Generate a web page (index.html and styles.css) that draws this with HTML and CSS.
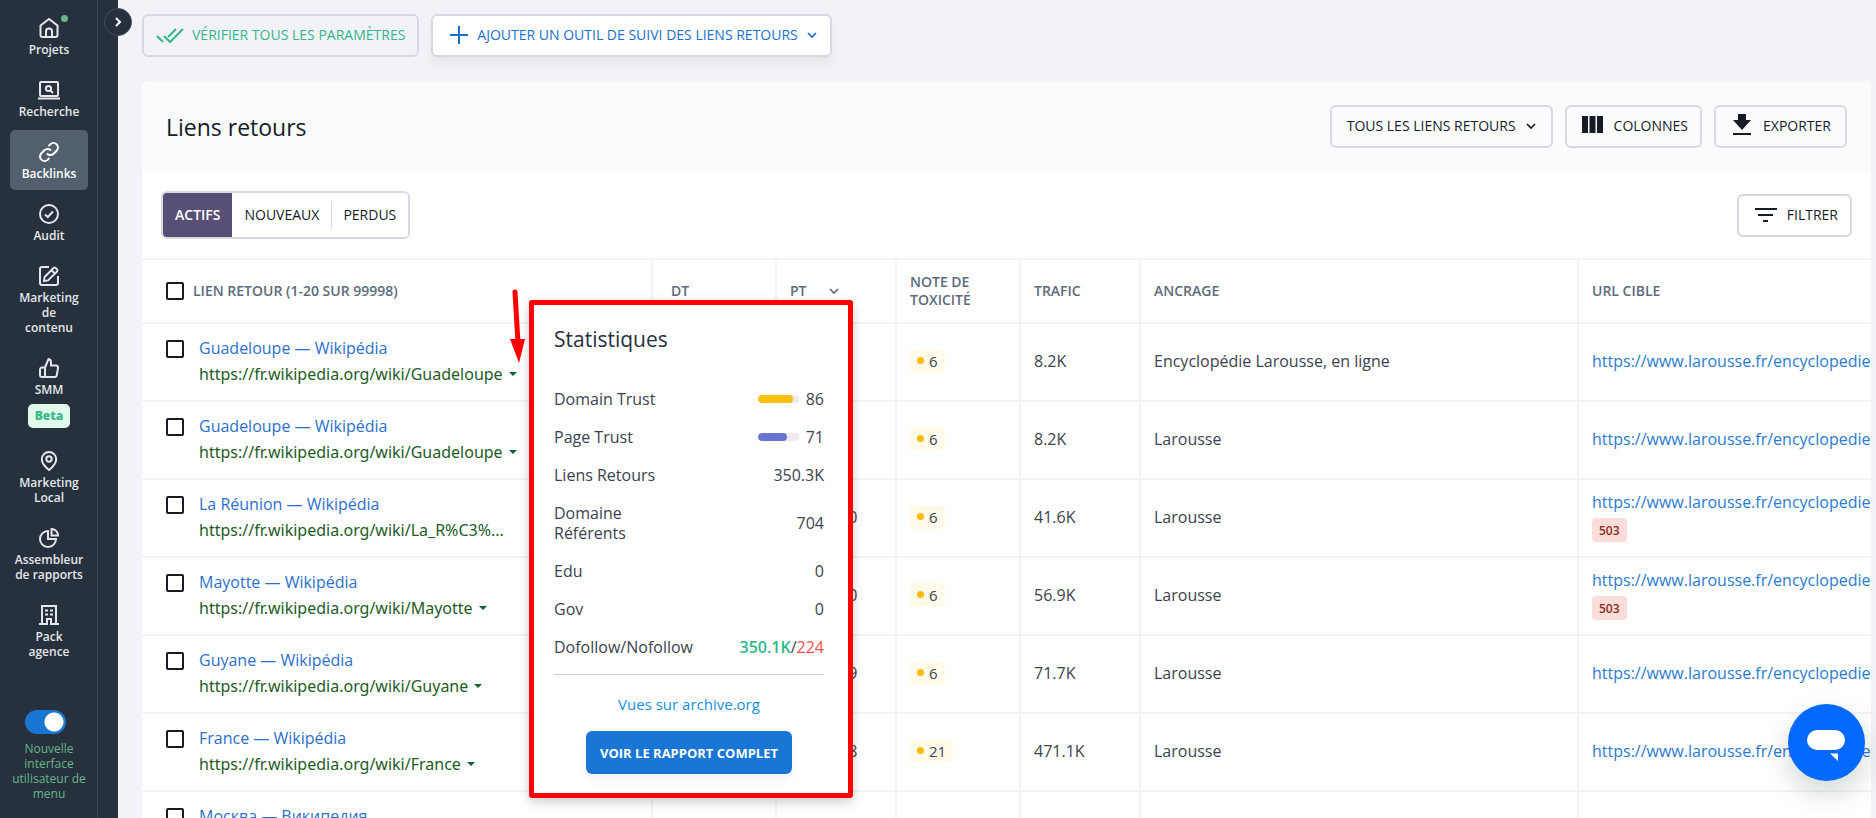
FILE: index.html
```html
<!DOCTYPE html>
<html lang="fr">
<head>
<meta charset="utf-8">
<title>Liens retours</title>
<link rel="stylesheet" href="styles.css">
</head>
<body>
<div class="app">
  <aside class="sidebar">
    <nav class="menu">
      <a class="menu-item" href="#"><svg class="menu-icon" viewBox="0 0 20 20"><path d="M1.500 7.500 10 1l8.500 6.500V17a2 2 0 0 1-2 2h-13a2 2 0 0 1-2-2z"/><path d="M7 19v-5.500a3 3 0 0 1 6 0V19"/></svg><span>Projets</span><i class="menu-dot"></i></a>
      <a class="menu-item" href="#"><svg class="menu-icon" viewBox="0 0 20 20"><rect x="1" y="2" width="18" height="14" rx="1"/><path d="M-1 18.500h22"/><circle cx="9.500" cy="8.500" r="2.600"/><path d="m11.500 10.500 2.500 2.500"/></svg><span>Recherche</span></a>
      <a class="menu-item menu-item-active" href="#"><svg class="menu-icon" viewBox="0 0 20 20"><path d="M8 11.500a4.500 4.500 0 0 0 6.600.3l3-3a4.500 4.500 0 0 0-6.400-6.400L9.500 4.100"/><path d="M12 8.500a4.500 4.500 0 0 0-6.600-.3l-3 3a4.500 4.500 0 0 0 6.400 6.400l1.700-1.700"/></svg><span>Backlinks</span></a>
      <a class="menu-item" href="#"><svg class="menu-icon" viewBox="0 0 20 20"><circle cx="10" cy="10" r="9"/><path d="m6 10.500 2.800 2.500L14 7.500"/></svg><span>Audit</span></a>
      <a class="menu-item" href="#"><svg class="menu-icon" viewBox="0 0 20 20"><path d="M10 1H3a2 2 0 0 0-2 2v14a2 2 0 0 0 2 2h14a2 2 0 0 0 2-2v-7"/><path d="M5 15l.6-4L14.500 2a1.600 1.600 0 0 1 2.200 0L18 3.300a1.600 1.600 0 0 1 0 2.200L9 14.400zM12.500 4.200l3.300 3.300"/></svg><span>Marketing de contenu</span></a>
      <a class="menu-item" href="#"><svg class="menu-icon" viewBox="0 0 20 20"><path d="M6 9.500 9.500 1A3 3 0 0 1 12 4v3.500h5.200A2 2 0 0 1 19 10l-1.200 7.200A2 2 0 0 1 16 19H3a2 2 0 0 1-2-2v-5.500a2 2 0 0 1 2-2zM6 9.500V19"/></svg><span>SMM</span><b class="beta">Beta</b></a>
      <a class="menu-item" href="#"><svg class="menu-icon" viewBox="0 0 20 20"><path d="M10 19S2.800 13 2.800 8.200a7.200 7.200 0 0 1 14.400 0C17.200 13 10 19 10 19z"/><circle cx="10" cy="8" r="2.700"/></svg><span>Marketing Local</span></a>
      <a class="menu-item" href="#"><svg class="menu-icon" viewBox="0 0 20 20"><path d="M9 3a8 8 0 1 0 8 8H9z"/><path d="M12.500 1v6.500H19A6.500 6.500 0 0 0 12.500 1z"/></svg><span>Assembleur de rapports</span></a>
      <a class="menu-item" href="#"><svg class="menu-icon" viewBox="0 0 20 20"><path d="M3 19V1h14v18M0 19h8v-5h4v5h8M6 5.500h3M11 5.500h3M6 9.500h3M11 9.500h3"/></svg><span>Pack agence</span></a>
    </nav>
    <label class="switch">
      <input type="checkbox" role="switch" checked>
      <span>Nouvelle interface utilisateur de menu</span>
    </label>
  </aside>
  <div class="rail"><button class="rail-toggle" aria-label="Ouvrir le menu"><svg viewBox="0 0 12 12"><path d="m4 2 4 4-4 4"/></svg></button></div>

  <main class="main">
    <div class="toolbar">
      <button class="btn btn-green"><svg class="ico-check" viewBox="0 0 28 17"><path d="m1 9 6 6M8 9l6 6L27 2M12 10l8-8"/></svg>VÉRIFIER TOUS LES PARAMÈTRES</button>
      <button class="btn btn-blue"><svg class="ico-plus" viewBox="0 0 18 18"><path d="M9 0v18M0 9h18"/></svg>AJOUTER UN OUTIL DE SUIVI DES LIENS RETOURS<svg class="ico-chev" viewBox="0 0 10 10"><path d="m1 3 4 4 4-4"/></svg></button>
    </div>

    <section class="card">
      <header class="card-head">
        <h1>Liens retours</h1>
        <div class="actions">
          <button class="btn btn-wide">TOUS LES LIENS RETOURS<svg class="ico-chev" viewBox="0 0 10 10"><path d="m1 3 4 4 4-4"/></svg></button>
          <button class="btn"><svg class="ico-cols" viewBox="0 0 22 17"><path d="M0 0h6v17H0zM7.500 0h6v17h-6zM15 0h6v17h-6z"/></svg>COLONNES</button>
          <button class="btn btn-export"><svg class="ico-down" viewBox="0 0 18 21"><path d="M5 0h8v6h5l-9 10-9-10h5zM0 19h18v2H0z"/></svg>EXPORTER</button>
        </div>
      </header>
      <div class="filters">
        <div class="tabs">
          <button class="tab tab-on">ACTIFS</button>
          <button class="tab">NOUVEAUX</button>
          <button class="tab tab-split">PERDUS</button>
        </div>
        <button class="btn"><svg class="ico-filter" viewBox="0 0 22 16"><path d="M0 1h22v2H0zM3 7h15v2H3zM8 13h5v2H8z"/></svg>FILTRER</button>
      </div>

      <table class="links">
        <colgroup><col class="c-link"><col class="c-dt"><col class="c-pt"><col class="c-tox"><col class="c-traf"><col class="c-anc"><col></colgroup>
        <thead>
          <tr>
            <th><label class="check-all"><input class="box" type="checkbox">LIEN RETOUR (1-20 SUR 99998)</label></th>
            <th class="dt">DT</th>
            <th><span class="sort">PT<svg class="ico-chev" viewBox="0 0 10 10"><path d="m1 3 4 4 4-4"/></svg></span></th>
            <th>NOTE DE TOXICITÉ</th><th>TRAFIC</th><th>ANCRAGE</th><th>URL CIBLE</th>
          </tr>
        </thead>
        <tbody>
          <tr>
            <td><div class="source"><input class="box" type="checkbox" aria-label="Guadeloupe"><div><a class="title" href="#">Guadeloupe — Wikipédia</a><a class="url" href="#">https://fr.wikipedia.org/wiki/Guadeloupe<i class="caret"></i></a></div></div></td>
            <td class="dt"></td><td></td>
            <td><span class="tox">6</span></td><td>8.2K</td><td>Encyclopédie Larousse, en ligne</td>
            <td><a class="target" href="#">https://www.larousse.fr/encyclopedie</a></td>
          </tr>
          <tr>
            <td><div class="source"><input class="box" type="checkbox" aria-label="Guadeloupe"><div><a class="title" href="#">Guadeloupe — Wikipédia</a><a class="url" href="#">https://fr.wikipedia.org/wiki/Guadeloupe<i class="caret"></i></a></div></div></td>
            <td class="dt"></td><td></td>
            <td><span class="tox">6</span></td><td>8.2K</td><td>Larousse</td>
            <td><a class="target" href="#">https://www.larousse.fr/encyclopedie</a></td>
          </tr>
          <tr>
            <td><div class="source"><input class="box" type="checkbox" aria-label="La Réunion"><div><a class="title" href="#">La Réunion — Wikipédia</a><a class="url" href="#">https://fr.wikipedia.org/wiki/La_R%C3%...</a></div></div></td>
            <td class="dt"></td><td><span class="trust">70</span></td>
            <td><span class="tox">6</span></td><td>41.6K</td><td>Larousse</td>
            <td><a class="target" href="#">https://www.larousse.fr/encyclopedie</a><span class="code">503</span></td>
          </tr>
          <tr>
            <td><div class="source"><input class="box" type="checkbox" aria-label="Mayotte"><div><a class="title" href="#">Mayotte — Wikipédia</a><a class="url" href="#">https://fr.wikipedia.org/wiki/Mayotte<i class="caret"></i></a></div></div></td>
            <td class="dt"></td><td><span class="trust">70</span></td>
            <td><span class="tox">6</span></td><td>56.9K</td><td>Larousse</td>
            <td><a class="target" href="#">https://www.larousse.fr/encyclopedie</a><span class="code">503</span></td>
          </tr>
          <tr>
            <td><div class="source"><input class="box" type="checkbox" aria-label="Guyane"><div><a class="title" href="#">Guyane — Wikipédia</a><a class="url" href="#">https://fr.wikipedia.org/wiki/Guyane<i class="caret"></i></a></div></div></td>
            <td class="dt"></td><td><span class="trust">69</span></td>
            <td><span class="tox">6</span></td><td>71.7K</td><td>Larousse</td>
            <td><a class="target" href="#">https://www.larousse.fr/encyclopedie</a></td>
          </tr>
          <tr>
            <td><div class="source"><input class="box" type="checkbox" aria-label="France"><div><a class="title" href="#">France — Wikipédia</a><a class="url" href="#">https://fr.wikipedia.org/wiki/France<i class="caret"></i></a></div></div></td>
            <td class="dt"></td><td><span class="trust">68</span></td>
            <td><span class="tox">21</span></td><td>471.1K</td><td>Larousse</td>
            <td><a class="target" href="#">https://www.larousse.fr/encyclopedie</a></td>
          </tr>
          <tr>
            <td><div class="source"><input class="box" type="checkbox" aria-label="Москва"><div><a class="title" href="#">Москва — Википедия</a></div></div></td>
            <td class="dt"></td><td></td><td></td><td></td><td></td><td></td>
          </tr>
        </tbody>
      </table>
    </section>

    <div class="popup">
      <h2>Statistiques</h2>
      <dl class="stats">
        <div><dt>Domain Trust</dt><dd><span class="bar"><i class="fill fill-gold" style="width:86%"></i></span>86</dd></div>
        <div><dt>Page Trust</dt><dd><span class="bar"><i class="fill fill-violet" style="width:71%"></i></span>71</dd></div>
        <div><dt>Liens Retours</dt><dd>350.3K</dd></div>
        <div><dt class="narrow">Domaine Référents</dt><dd>704</dd></div>
        <div><dt>Edu</dt><dd>0</dd></div>
        <div><dt>Gov</dt><dd>0</dd></div>
        <div><dt>Dofollow/Nofollow</dt><dd><span class="follow">350.1K</span>/<span class="nofollow">224</span></dd></div>
      </dl>
      <a class="archive" href="#">Vues sur archive.org</a>
      <button class="report">VOIR LE RAPPORT COMPLET</button>
    </div>
    <svg class="arrow" viewBox="0 0 16 74"><path class="arrow-line" d="M5 3 8 54"/><path class="arrow-head" d="M0 50h15L9 74z"/></svg>
  </main>
  <button class="chat" aria-label="Ouvrir le chat"><svg viewBox="0 0 77 77"><rect x="19" y="26" width="38" height="20" rx="10"/><path d="M42 49.500h8V57z"/></svg></button>
</div>
</body>
</html>
```
FILE: styles.css
```css
* { box-sizing: border-box; }
body {
  margin: 0;
  background: #f2f3f8;
  color: #3b434f;
  font: 16px/20px "Open Sans", "Noto Sans", sans-serif;
}
a { text-decoration: none; color: inherit; }
button { font: inherit; cursor: pointer; }
svg { display: block; flex: none; fill: none; stroke: currentColor; overflow: visible; }

.app { display: flex; height: 100vh; overflow: hidden; position: relative; }

/* Sidebar */
.sidebar {
  flex: none;
  width: 98px;
  padding: 6px 9px 0 10px;
  background: #27313d;
  border-right: 1px solid #3e4955;
  display: flex;
  flex-direction: column;
  gap: 42px;
  color: #e4e6ea;
  font-size: 12px;
  line-height: 15px;
  font-weight: 600;
  text-align: center;
}
.menu { display: flex; flex-direction: column; gap: 2px; }
.menu-item {
  position: relative;
  display: flex;
  flex-direction: column;
  align-items: center;
  gap: 4px;
  padding: 12px 4px 9px;
  border-radius: 5px;
}
.menu-item-active { background: #515f6f; color: #fff; }
.menu-icon { width: 20px; height: 20px; stroke-width: 2; }
.menu-item span { width: min-content; }
.menu-dot { position: absolute; top: 9px; right: 20px; width: 7px; height: 7px; border-radius: 50%; background: #67b588; }
.beta { margin-top: 3px; padding: 4px 7px 5px; border-radius: 5px; background: #e0faec; color: #3bb98a; }
.switch { display: flex; flex-direction: column; gap: 7px; color: #67b588; font-weight: 500; }
.switch span { margin: 0 -6px; }
.switch input {
  appearance: none;
  width: 41px;
  height: 24px;
  margin: 0 0 0 15px;
  border-radius: 12px;
  background: radial-gradient(circle at 29px 12px, #fff 9px, #1976d2 10px);
}
.rail { position: relative; flex: none; width: 20px; background: #27313d; }
.rail-toggle {
  position: absolute;
  top: 8px;
  left: 6px;
  z-index: 2;
  width: 28px;
  height: 28px;
  padding: 0;
  border: 1px solid #434c58;
  border-radius: 50%;
  background: #27313d;
  color: #fff;
  display: grid;
  place-items: center;
}
.rail-toggle svg { width: 12px; height: 12px; stroke-width: 2; }

/* Main column */
.main { position: relative; flex: 1; min-width: 0; padding: 14px 5px 0 24px; }
.toolbar { display: flex; gap: 12px; margin-bottom: 24px; }
.btn {
  height: 43px;
  padding: 0 12px 1px;
  display: flex;
  align-items: center;
  gap: 8px;
  border: 2px solid #d8d8e3;
  border-radius: 6px;
  background: transparent;
  color: #161b26;
  font-size: 14px;
  white-space: nowrap;
}
.btn-wide { padding: 0 15px 1px; gap: 10px; }
.btn-export { padding: 0 14px 1px; }
.btn-green { color: #36b58a; }
.btn-blue { padding: 0 13px 1px 17px; gap: 9px; background: #fff; color: #1b70cb; box-shadow: 0 8px 10px rgba(0, 0, 0, .05); }
.ico-check { width: 28px; height: 17px; stroke-width: 2; }
.ico-plus { width: 18px; height: 18px; stroke-width: 2; }
.ico-chev { width: 10px; height: 10px; stroke-width: 1.7; }
.ico-cols, .ico-down, .ico-filter { fill: currentColor; stroke: none; }
.ico-cols { width: 22px; height: 17px; margin: 0 2px 4px 3px; }
.ico-down { width: 18px; height: 21px; margin: 0 4px 4px 3px; }
.ico-filter { width: 22px; height: 16px; margin: 0 2px 0 4px; }

.card { background: #fff; border-radius: 6px 6px 0 0; overflow: hidden; }
.card-head {
  height: 91px;
  padding: 0 24px;
  display: flex;
  align-items: center;
  justify-content: space-between;
  background: #fafbfd;
}
h1 { margin: 0; color: #161b26; font-size: 23px; line-height: 30px; font-weight: 400; }
.actions { display: flex; gap: 12px; }
.filters { height: 86px; padding: 0 19px; display: flex; align-items: center; justify-content: space-between; }
.tabs { display: flex; border: 2px solid #d8d8e3; border-radius: 6px; overflow: hidden; }
.tab { height: 44px; padding: 0 12px; border: 0; background: #fff; color: #161b26; font-size: 14px; }
.tab-on { background: #585074; color: #fff; font-weight: 600; }
.tab-split { background: linear-gradient(#d8d8e3, #d8d8e3) 0 50% / 1px 28px no-repeat #fff; }

/* Table */
.links { width: 100%; table-layout: fixed; border-collapse: collapse; }
.c-link { width: 510px; }
.c-dt, .c-tox { width: 124px; }
.c-pt, .c-traf { width: 120px; }
.c-anc { width: 438px; }
.links th, .links td {
  padding: 0 14px 0 13px;
  border: 2px solid #f3f3f8;
  text-align: left;
  overflow: hidden;
}
.links td { height: 78px; padding-bottom: 3px; }
.links th:first-child, .links td:first-child { padding-left: 24px; border-left: 0; }
.links th:last-child, .links td:last-child { padding-right: 0; border-right: 0; }
.links .dt { padding-left: 18px; }
.links th { height: 64px; color: #5d6b7c; font-size: 14px; line-height: 18px; font-weight: 600; }
.check-all { display: flex; align-items: center; gap: 9px; }
.sort { display: flex; align-items: center; gap: 22px; }
.box {
  appearance: none;
  flex: none;
  width: 18px;
  height: 18px;
  margin: 0;
  border: 2px solid #161b26;
  border-radius: 2px;
  background: #fff;
}
.source { height: 46px; display: flex; align-items: flex-start; gap: 15px; }
.source .box { margin-top: 2px; }
.source div { display: grid; gap: 6px; }
.title { color: #2d70cc; white-space: nowrap; }
.url {
  display: flex;
  align-items: center;
  gap: 6px;
  color: #1d5c26;
  font-family: "Noto Sans", "Open Sans", sans-serif;
  white-space: nowrap;
}
.caret { border: 4px solid transparent; border-top-color: #0d6332; border-bottom: 0; }
.trust { margin-left: 49px; }
.tox {
  display: inline-flex;
  align-items: center;
  gap: 5px;
  height: 24px;
  padding: 0 7px;
  border-radius: 4px;
  background: #fffaea;
  font-size: 15px;
}
.tox::before { content: ""; width: 7px; height: 7px; border-radius: 50%; background: #fbbc09; }
.target { display: block; color: #2a7bd0; white-space: nowrap; }
.code {
  display: inline-block;
  margin-top: 6px;
  padding: 3px 7px 1px;
  border-radius: 4px;
  background: #fadcd9;
  color: #8b2e20;
  font-size: 12px;
  font-weight: 600;
}

/* Statistics popup */
.popup {
  position: absolute;
  top: 300px;
  left: 411px;
  width: 324px;
  padding: 20px 24px 19px 20px;
  border: 5px solid #f00;
  border-radius: 3px;
  background: #fff;
  box-shadow: 0 4px 12px rgba(0, 0, 0, .2);
  display: flex;
  flex-direction: column;
}
h2 { margin: 0 0 36px; color: #27303d; font-size: 21px; line-height: 28px; font-weight: 400; }
.stats { margin: 0; padding-bottom: 17px; border-bottom: 1px solid #cfd2d6; display: grid; gap: 18px; }
.stats > div { display: flex; align-items: center; justify-content: space-between; }
.narrow { width: 100px; }
dd { margin: 0; display: flex; align-items: center; }
.bar { width: 41px; height: 8px; margin-right: 7px; border-radius: 4px; background: #ececef; overflow: hidden; }
.fill { display: block; height: 8px; border-radius: 4px; }
.fill-gold { background: #fbbf0c; }
.fill-violet { background: #6a72d2; }
.follow { color: #2fb98a; font-weight: 600; }
.nofollow { color: #f6504d; }
.archive { margin: 19px 0 17px; color: #1890dd; font-size: 15px; text-align: center; }
.report {
  align-self: center;
  height: 43px;
  padding: 0 14px;
  border: 0;
  border-radius: 6px;
  background: #1976d5;
  color: #fff;
  font-size: 13px;
  font-weight: 700;
  box-shadow: 0 8px 10px rgba(0, 0, 0, .04);
}
.arrow { position: absolute; top: 289px; left: 392px; width: 16px; height: 74px; }
.arrow-line { stroke: #f00; stroke-width: 5; stroke-linecap: round; }
.arrow-head { fill: #f00; stroke: none; }

.chat {
  position: absolute;
  right: 11px;
  bottom: 37px;
  width: 77px;
  height: 77px;
  padding: 0;
  border: 0;
  border-radius: 50%;
  background: #0569ff;
  box-shadow: 0 12px 28px rgba(20, 60, 50, .2);
}
.chat svg { width: 77px; height: 77px; fill: #fff; stroke: none; }
```
